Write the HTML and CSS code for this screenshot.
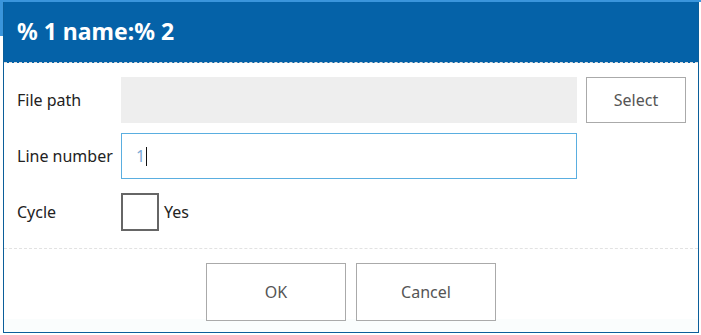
FILE: index.html
```html
<html>
	<head>
		<title>% 1 name:% 2</title>
		<link rel="stylesheet" href="styles.css">
	</head>
	<body>
		<div class="dialog">
			<div class="dialog-header">% 1 name:% 2</div>
			<div class="dialog-body">
				<div class="form-row">
					<div class="form-label">File path</div>
					<div class="field field-disabled"></div>
					<div class="button select-button">Select</div>
				</div>
				<div class="form-row">
					<div class="form-label">Line number</div>
					<div class="field field-focus"><span class="field-value">1</span><span class="caret"></span></div>
				</div>
				<div class="form-row">
					<div class="form-label">Cycle</div>
					<div class="checkbox"></div>
					<div class="checkbox-text">Yes</div>
				</div>
			</div>
			<div class="dialog-footer">
				<div class="button footer-button">OK</div>
				<div class="button footer-button">Cancel</div>
			</div>
		</div>
	</body>
</html>
```

FILE: styles.css
```css
html {
	background:
		linear-gradient(#3a95dc, #3a95dc) 0 0 / 100% 2px no-repeat,
		linear-gradient(#3a95dc, #3a95dc) 0 0 / 3px 36px no-repeat,
		#ffffff;
}
body {
	margin: 0px;
	padding: 2px 0 0 3px;
	font-family: "Noto Sans", "Open Sans", sans-serif;
	color: #222;
}
.dialog {
	width: 694px;
	height: 330px;
	border: 1px solid #0b5e9a;
	border-top: 0;
	background: #fff;
	display: flex;
	flex-direction: column;
}
.dialog-header {
	height: 61px;
	box-sizing: border-box;
	background-color: #0562a8;
	color: #fff;
	font-size: 23px;
	font-weight: bold;
	padding-left: 13px;
	display: flex;
	align-items: center;
	padding-bottom: 2px;
	border-bottom: 1px dashed #dcdcdc;
}
.dialog-body {
	padding: 14px 11px 13px 13px;
	display: flex;
	flex-direction: column;
	gap: 10px;
	border-bottom: 1px dashed #e2e2e2;
}
.form-row {
	height: 46px;
	display: flex;
	align-items: center;
}
.form-label {
	width: 104px;
	font-size: 16px;
	flex: none;
}
.field {
	width: 456px;
	height: 46px;
	box-sizing: border-box;
	flex: none;
	display: flex;
	align-items: center;
	padding-left: 14px;
}
.field-disabled {
	background-color: #eeeeee;
}
.field-focus {
	border: 1px solid #5aaee0;
}
.field-value {
	color: #7aa9d6;
	font-size: 16px;
}
.caret {
	width: 1px;
	height: 19px;
	background: #111;
	margin-left: 1px;
}
.button {
	display: flex;
	align-items: center;
	justify-content: center;
	box-sizing: border-box;
	border: 1px solid #aaa;
	color: #555;
	background: #fff;
	font-size: 16px;
}
.select-button {
	width: 100px;
	height: 46px;
	margin-left: 9px;
}
.checkbox {
	width: 38px;
	height: 38px;
	box-sizing: border-box;
	border: 2px solid #666;
}
.checkbox-text {
	font-size: 16px;
	margin-left: 5px;
}
.dialog-footer {
	flex: 1;
	display: flex;
	justify-content: center;
	align-items: flex-start;
	gap: 10px;
	padding-top: 14px;
	background: linear-gradient(#fff 70px, #fafdfd 70px);
}
.footer-button {
	width: 140px;
	height: 58px;
}
```
